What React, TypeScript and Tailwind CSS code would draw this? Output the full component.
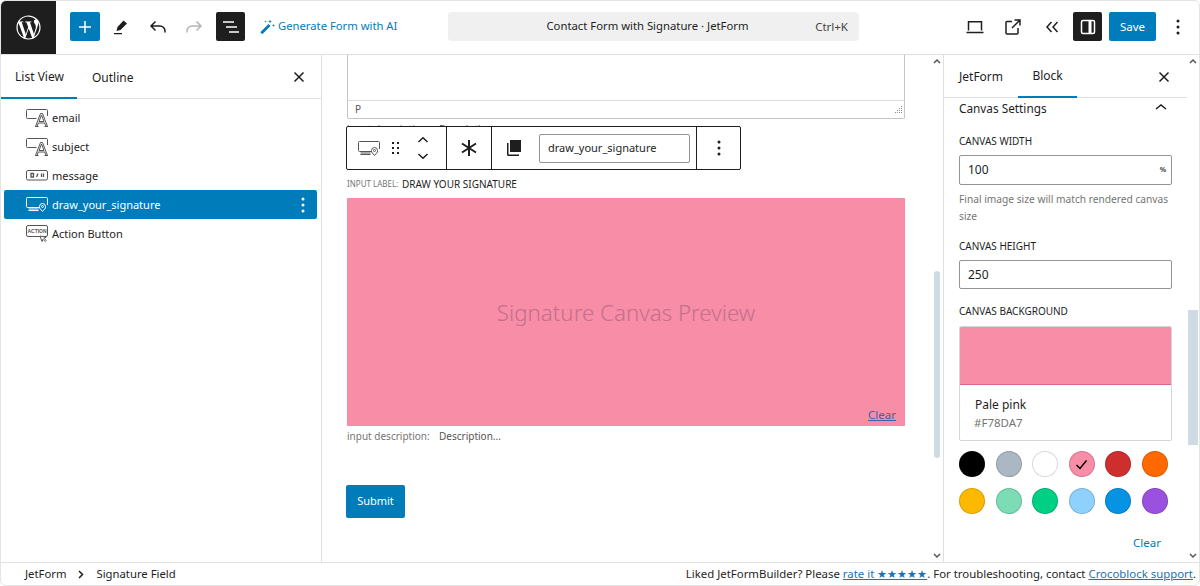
import React from "react";

const Field = () => (
  <svg width="22" height="18" viewBox="0 0 22 18" fill="none" stroke="currentColor" strokeWidth="1">
    <path d="M21.500 7V1.500a1 1 0 0 0-1-1H1.500a1 1 0 0 0-1 1v7a1 1 0 0 0 1 1h9" />
    <path d="M11 17.500h-1.500L14.500 4.500h2l5 13H20l-1.300-3.500h-6.400zM13 12.500h5l-2.500-6.500z" />
    <path d="M9 17.500h3.500M18.500 17.500H22" />
  </svg>
);
const Sig = () => (
  <svg width="22" height="15" viewBox="0 0 22 15" fill="none" stroke="currentColor" strokeWidth="1">
    <path d="M13 10.500H1.500a1 1 0 0 1-1-1v-8a1 1 0 0 1 1-1h19a1 1 0 0 1 1 1V8" />
    <path d="M2.500 12h10M2.500 13.500h10" />
    <path d="M16.500 14.500 13.500 11V9.500a3 3 0 0 1 6 0V11z" />
    <circle cx="16.500" cy="9.500" r="1" />
  </svg>
);
const Msg = () => (
  <svg width="22" height="11" viewBox="0 0 22 11" fill="none" stroke="currentColor" strokeWidth="1">
    <rect x="0.500" y="0.500" width="21" height="9.500" rx="1.500" />
    <path d="M5 3.500h2.500v3.500H5zM10.500 7l1.500-3.500M15.500 3.500V7M17.500 3.500V7" strokeWidth="1.300" />
  </svg>
);
const Act = () => (
  <svg width="22" height="18" viewBox="0 0 22 18" fill="none" stroke="currentColor" strokeWidth="1">
    <rect x="0.500" y="0.500" width="21" height="11" rx="1.500" />
    <text x="11" y="7.800" textAnchor="middle" fontSize="5" fontWeight="700" fill="currentColor" stroke="none" fontFamily="'Liberation Sans',sans-serif">ACTION</text>
    <path d="M14 11l2 5.500 1-2.200 2.200 2.200 1-1-2.200-2.200 2.200-1z" fill="#fff" />
  </svg>
);
const Kebab = ({ c = "#1e1e1e" }: { c?: string }) => (
  <svg width="4" height="16" viewBox="0 0 4 16" fill={c}>
    <circle cx="2" cy="2" r="1.500" />
    <circle cx="2" cy="8" r="1.500" />
    <circle cx="2" cy="14" r="1.500" />
  </svg>
);
const Close = () => (
  <svg width="12" height="12" viewBox="0 0 12 12" stroke="#1e1e1e" strokeWidth="1.500" fill="none">
    <path d="M1.500 1.500l9 9M10.500 1.500l-9 9" />
  </svg>
);

const listItems = [
  { n: "email", i: <Field /> },
  { n: "subject", i: <Field /> },
  { n: "message", i: <Msg /> },
];

const swatches = [
  "#000000", "#abb8c3", "#ffffff", "#f78da7", "#cf2e2e", "#ff6900",
  "#fcb900", "#7bdcb5", "#00d084", "#8ed1fc", "#0693e3", "#9b51e0",
];

const ScrollTrack = ({ cls, thumb }: { cls: string; thumb: string }) => (
  <div className={`absolute top-0 bottom-0 w-[10px] ${cls}`}>
    <svg className="absolute top-[3px] left-[1px]" width="8" height="6" viewBox="0 0 8 6" fill="none" stroke="#555" strokeWidth="1.500"><path d="M1 5l3-3 3 3" /></svg>
    <div className={`absolute bg-[#cfdbe3] ${thumb}`} />
    <svg className="absolute bottom-[3px] left-[1px]" width="8" height="6" viewBox="0 0 8 6" fill="none" stroke="#555" strokeWidth="1.500"><path d="M1 1l3 3 3-3" /></svg>
  </div>
);

export default function App() {
  return (
    <div className="flex h-[586px] w-[1200px] flex-col overflow-hidden rounded-[6px] border border-[#e4e4e4] bg-white text-[12px] text-[#1e1e1e] font-['Noto_Sans','Open_Sans',sans-serif]">
      {/* top bar */}
      <header className="flex h-[54px] shrink-0 items-center border-b border-[#e0e0e0] pb-[2px]">
        <div className="flex h-[53px] w-[55px] shrink-0 items-center justify-center self-start bg-[#1e1e1e]">
          <svg width="29" height="29" viewBox="0 0 24 24" fill="#fff">
            <path d="M12 2a10 10 0 1 0 0 20 10 10 0 0 0 0-20zM3 12c0-1.300.28-2.530.78-3.640l4.290 11.750A9 9 0 0 1 3 12zm9 9c-.88 0-1.730-.13-2.540-.37l2.700-7.840 2.760 7.570.06.130A9 9 0 0 1 12 21zm1.240-13.220c.54-.03 1.030-.09 1.030-.09.48-.06.43-.77-.06-.74 0 0-1.460.11-2.400.11-.88 0-2.370-.11-2.370-.11-.49-.03-.54.71-.06.74 0 0 .46.06.95.09l1.410 3.870-1.980 5.940-3.300-9.810c.55-.03 1.040-.09 1.040-.09.48-.06.43-.77-.06-.74 0 0-1.460.11-2.400.11l-.58-.01A9 9 0 0 1 12 3c2.350 0 4.480.9 6.080 2.370h-.12c-.88 0-1.510.77-1.510 1.600 0 .74.43 1.370.88 2.110.34.600.74 1.370.74 2.480 0 .77-.3 1.660-.68 2.910l-.9 3-3.250-9.690zm3.290 12.010 2.750-7.950c.51-1.280.68-2.310.68-3.220 0-.33-.02-.64-.06-.93A9 9 0 0 1 21 12a9 9 0 0 1-4.470 7.790z" />
          </svg>
        </div>
        <div className="ml-[14px] flex h-[29px] w-[30px] items-center justify-center rounded-[2px] bg-[#007cba]">
          <svg width="14" height="14" viewBox="0 0 14 14" stroke="#fff" strokeWidth="1.500"><path d="M7 1v12M1 7h12" /></svg>
        </div>
        <div className="ml-[6px] flex h-[29px] w-[30px] items-center justify-center">
          <svg width="18" height="18" viewBox="0 0 18 18" fill="#1e1e1e"><path d="M11.500 2.500 15 5.500 8.500 12l-4 1 1-4zM2 15h8v1.300H2z" /></svg>
        </div>
        <div className="ml-[7px] flex h-[29px] w-[30px] items-center justify-center">
          <svg width="18" height="14" viewBox="0 0 18 14" fill="none" stroke="#1e1e1e" strokeWidth="1.500"><path d="M6.500 1.500 2 6l4.500 4.500M2 6h9a5 5 0 0 1 5 5v1.500" /></svg>
        </div>
        <div className="ml-[6px] flex h-[29px] w-[30px] items-center justify-center">
          <svg width="18" height="14" viewBox="0 0 18 14" fill="none" stroke="#b5b5b5" strokeWidth="1.500"><path d="M11.500 1.500 16 6l-4.500 4.500M16 6H7a5 5 0 0 0-5 5v1.500" /></svg>
        </div>
        <div className="ml-[7px] flex h-[29px] w-[29px] items-center justify-center rounded-[2px] bg-[#1e1e1e]">
          <svg width="18" height="14" viewBox="0 0 18 14" stroke="#fff" strokeWidth="1.500"><path d="M1 2h11M4 7h11M7 12h10" /></svg>
        </div>
        <div className="ml-[15px] flex w-[188px] items-center gap-[3px] text-[11.250px] text-[#007cba]">
          <svg width="15" height="15" viewBox="0 0 15 15" fill="#007cba"><path d="M1 12.500 8.500 5l2 2L3 14.500a1 1 0 0 1-1.500 0L1 14a1 1 0 0 1 0-1.500z" /><path d="M10 .500l.5 1.500 1.500.5-1.500.5-.5 1.500-.5-1.500L8 2.500l1.500-.5zM13.500 5l.4 1.100 1.100.4-1.100.4-.4 1.100-.4-1.100-1.100-.4 1.100-.4zM5.500 1.500l.3.800.8.300-.8.300-.3.800-.3-.8-.8-.3.800-.3z" /></svg>
          <span>Generate Form with AI</span>
        </div>
        <div className="relative flex h-[29px] w-[411px] items-center justify-center rounded-[4px] bg-[#f0f0f0] text-[11.300px]">
          <span className="ml-[-12px]">Contact Form with Signature · JetForm</span>
          <span className="absolute right-[11px] text-[11.500px] text-[#444]">Ctrl+K</span>
        </div>
        <div className="ml-auto flex items-center">
          <div className="flex h-[29px] w-[30px] items-center justify-center">
            <svg width="20" height="14" viewBox="0 0 20 14" fill="none" stroke="#1e1e1e" strokeWidth="1.500"><path d="M3.500 10.500V1.750h13v8.750M1.500 12.500h17" /></svg>
          </div>
          <div className="ml-[8px] flex h-[29px] w-[30px] items-center justify-center">
            <svg width="16" height="16" viewBox="0 0 16 16" fill="none" stroke="#1e1e1e" strokeWidth="1.500"><path d="M7 2.500H2a1 1 0 0 0-1 1V14a1 1 0 0 0 1 1h10a1 1 0 0 0 1-1V9M9.500 1H15v5.500M15 1 7 9" /></svg>
          </div>
          <div className="ml-[9px] flex h-[29px] w-[30px] items-center justify-center">
            <svg width="14" height="12" viewBox="0 0 14 12" fill="none" stroke="#1e1e1e" strokeWidth="1.500"><path d="M6.500 1 2 6l4.500 5M12.500 1 8 6l4.500 5" /></svg>
          </div>
          <div className="ml-[6px] flex h-[29px] w-[29px] items-center justify-center rounded-[2px] bg-[#1e1e1e]">
            <svg width="16" height="16" viewBox="0 0 16 16" fill="none" stroke="#fff" strokeWidth="1.500"><rect x="1.500" y="1.500" width="13" height="13" rx="1.500" /><path d="M10 1.500v13" strokeWidth="3" /></svg>
          </div>
          <div className="ml-[7px] flex h-[29px] w-[47px] items-center justify-center rounded-[2px] bg-[#007cba] text-[11.500px] text-white">Save</div>
          <div className="ml-[20px] mr-[19px]"><Kebab /></div>
        </div>
      </header>

      {/* body */}
      <div className="flex min-h-0 flex-1">
        <aside className="w-[321px] shrink-0 border-r border-[#e0e0e0]">
          <div className="flex h-[44px] items-center border-b border-[#e0e0e0] pr-[16px] text-[12px]">
            <div className="flex h-[44px] w-[76px] items-center justify-center border-b-2 border-[#007cba] pl-px pt-[2px]">List View</div>
            <div className="ml-[15px] pt-[2px]">Outline</div>
            <div className="ml-auto"><Close /></div>
          </div>
          <div className="px-[3px] pt-[4px]">
            {listItems.map((it) => (
              <div key={it.n} className="flex h-[29px] items-center gap-[4px] pl-[22px]">
                <span className="flex w-[22px] justify-center text-[#555]">{it.i}</span>
                <span className="mt-px text-[11px]">{it.n}</span>
              </div>
            ))}
            <div className="flex h-[29px] w-[313px] items-center gap-[4px] rounded-[2px] bg-[#007cba] pl-[22px] pr-[12px] text-white">
              <span className="flex w-[22px] justify-center"><Sig /></span>
              <span className="mt-px text-[11px]">draw_your_signature</span>
              <span className="ml-auto"><Kebab c="#fff" /></span>
            </div>
            <div className="flex h-[30px] items-center gap-[4px] pl-[22px] text-[#555]">
              <span className="flex w-[22px] justify-center"><Act /></span>
              <span className="text-[11px] text-[#1e1e1e]">Action Button</span>
            </div>
          </div>
        </aside>

        <main className="relative min-w-0 flex-1 overflow-hidden border-r border-[#e0e0e0] pl-[25px]">
          <ScrollTrack cls="right-[1px]" thumb="left-[2px] top-[216px] h-[187px] w-[6px] rounded-[3px]" />
          <div className="w-[558px] rounded-b-[2px] border border-t-0 border-[#c3c4c7]">
            <div className="h-[45px]" />
            <div className="flex h-[18px] items-center border-t border-[#dcdcde] pl-[7px] pr-[1px] text-[10px] text-[#50575e]">
              <span>P</span>
              <svg className="ml-auto" width="10" height="10" viewBox="0 0 10 10" fill="#8c8f94"><path d="M8 1h1v1H8zM6 3h1v1H6zM8 3h1v1H8zM4 5h1v1H4zM6 5h1v1H6zM8 5h1v1H8zM2 7h1v1H2zM4 7h1v1H4zM6 7h1v1H6zM8 7h1v1H8z" /></svg>
            </div>
          </div>
          <div className="flex h-[7px] overflow-visible pt-[3px] text-[10px] leading-[14px]">
            <span className="w-[92px] shrink-0 text-[#757575]">input description:</span>
            <span className="text-[#555]">Description...</span>
          </div>
          {/* block toolbar */}
          <div className="absolute left-[24px] top-[71px] flex h-[44px] items-center rounded-[2px] border border-[#1e1e1e] bg-white">
            <div className="flex h-full w-[100px] items-center border-r border-[#1e1e1e] pl-[11px] text-[#555]">
              <Sig />
              <svg className="ml-[12px]" width="8" height="14" viewBox="0 0 8 14" fill="#1e1e1e"><path d="M0 1h2v2H0zM5 1h2v2H5zM0 6h2v2H0zM5 6h2v2H5zM0 11h2v2H0zM5 11h2v2H5z" /></svg>
              <svg className="ml-[17px]" width="12" height="24" viewBox="0 0 12 24" fill="none" stroke="#1e1e1e" strokeWidth="1.500"><path d="M1.500 6 6 1.800 10.500 6M1.500 18 6 22.200 10.500 18" /></svg>
            </div>
            <div className="flex h-full w-[45px] items-center justify-center border-r border-[#1e1e1e]">
              <svg width="18" height="18" viewBox="0 0 18 18" stroke="#1e1e1e" strokeWidth="2"><path d="M9 1v16M2 4.500l14 9M16 4.500l-14 9" /></svg>
            </div>
            <div className="flex h-full w-[205px] items-center border-r border-[#1e1e1e] pl-[15px]">
              <svg width="14" height="16" viewBox="0 0 14 16" fill="#1e1e1e"><path d="M3 0h11v12H3z" /><path d="M0 3h1.500v11.500H12V16H1.500A1.500 1.500 0 0 1 0 14.500z" /></svg>
              <div className="ml-[18px] flex h-[29px] w-[151px] items-center rounded-[2px] border border-[#949494] px-[8px] pt-px text-[11px]">draw_your_signature</div>
            </div>
            <div className="flex h-full w-[43px] items-center justify-center"><Kebab /></div>
          </div>

          <div className="mt-[51px] flex h-[14px] items-center">
            <span className="w-[55px] text-[8px] text-[#757575]">INPUT LABEL:</span>
            <span className="text-[10px] text-[#1e1e1e]">DRAW YOUR SIGNATURE</span>
          </div>
          <div className="relative mt-[7px] flex h-[228px] w-[558px] items-center justify-center bg-[#f78da7]">
            <span className="mt-[2px] text-[22.300px] font-light text-[#c4708a]">Signature Canvas Preview</span>
            <span className="absolute bottom-[3px] right-[9px] text-[11.500px] text-[#3f5fa8] underline">Clear</span>
          </div>
          <div className="mt-[3px] flex h-[14px] items-center text-[10px]">
            <span className="w-[92px] text-[#757575]">input description:</span>
            <span className="text-[#555]">Description...</span>
          </div>
          <div className="mt-[42px] ml-[-1px] flex h-[33px] w-[59px] items-center justify-center rounded-[2px] bg-[#007cba] text-[11px] text-white">Submit</div>
        </main>

        <aside className="relative w-[255px] shrink-0 overflow-hidden">
          <ScrollTrack cls="right-[1px]" thumb="left-0 top-[255px] h-[135px] w-[10px]" />
          <div className="mr-[12px] flex h-[43px] items-center border-b border-[#e0e0e0] pt-px text-[12px]">
            <div className="ml-[15px]">JetForm</div>
            <div className="ml-[15px] flex h-[43px] w-[59px] items-center justify-center border-b-2 border-[#007cba]">Block</div>
            <div className="ml-auto mr-[17px]"><Close /></div>
          </div>
          <div className="w-[213px] pl-[15px] box-content">
            <div className="mt-px flex h-[20px] items-center justify-between text-[11.800px]">
              <span>Canvas Settings</span>
              <svg className="mr-[5px] mb-[5px]" width="12" height="8" viewBox="0 0 12 8" fill="none" stroke="#1e1e1e" strokeWidth="1.500"><path d="M1 6l5-4 5 4" /></svg>
            </div>
            <div className="mt-[15px] text-[10px] leading-[14px]">CANVAS WIDTH</div>
            <div className="mt-[7px] flex h-[30px] items-center justify-between rounded-[2px] border border-[#949494] pl-[8px] pr-[5px] text-[12px]">
              <span>100</span>
              <span className="text-[7px] font-bold text-[#444]">%</span>
            </div>
            <div className="mt-[6px] text-[10.200px] leading-[17px] text-[#757575]">Final image size will match rendered canvas size</div>
            <div className="mt-[14px] text-[10px] leading-[14px]">CANVAS HEIGHT</div>
            <div className="mt-[7px] flex h-[29px] items-center rounded-[2px] border border-[#949494] pl-[8px] text-[12px]">250</div>
            <div className="mt-[15px] text-[10px] leading-[14px]">CANVAS BACKGROUND</div>
            <div className="mt-[8px] overflow-hidden rounded-[2px] border border-[#d6d6d6]">
              <div className="h-[58px] border-b border-[#d8688a] bg-[#f78da7]" />
              <div className="h-[55px] pl-[15px] pt-[10px]">
                <div className="text-[12px] leading-[20px]">Pale pink</div>
                <div className="ml-[-1px] text-[11.500px] leading-[15px] text-[#757575]">#F78DA7</div>
              </div>
            </div>
            <div className="mt-[10px] grid grid-cols-[repeat(6,26px)] gap-x-[10.500px] gap-y-[10.500px]">
              {swatches.map((c) => (
                <div key={c} className="flex h-[26px] w-[26px] items-center justify-center rounded-full border border-black/15" style={{ background: c }}>
                  {c === "#f78da7" && (
                    <svg width="13" height="11" viewBox="0 0 13 11" fill="none" stroke="#000" strokeWidth="1.500"><path d="M1.500 6 5 9.500 11.500 1.500" /></svg>
                  )}
                </div>
              ))}
            </div>
            <div className="mt-[20px] pr-[11px] text-right text-[11.500px] text-[#007cba]">Clear</div>
          </div>
        </aside>
      </div>

      {/* footer */}
      <footer className="flex h-[23px] shrink-0 items-center border-t border-[#e0e0e0] pl-[24px] pr-[3px] text-[11.300px] leading-none">
        <span>JetForm</span>
        <svg className="mx-[12px]" width="6" height="9" viewBox="0 0 6 9" fill="none" stroke="#1e1e1e" strokeWidth="1.500"><path d="M1 1l3.500 3.500L1 8" /></svg>
        <span>Signature Field</span>
        <span className="ml-auto text-[11.400px]">
          Liked JetFormBuilder? Please <span className="text-[#2271b1] underline">rate it ★★★★★</span>. For troubleshooting, contact <span className="text-[#2271b1] underline">Crocoblock support</span>.
        </span>
      </footer>
    </div>
  );
}
